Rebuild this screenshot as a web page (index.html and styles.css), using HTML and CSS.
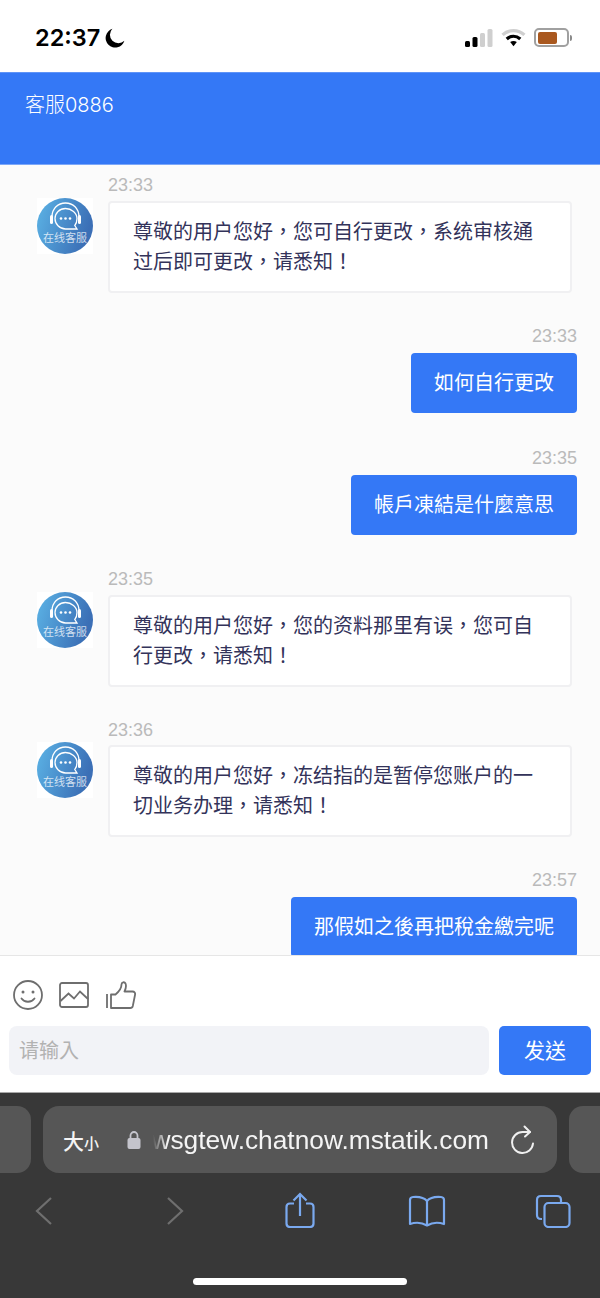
FILE: index.html
```html
<!DOCTYPE html>
<html lang="zh-TW">
<head>
<meta charset="utf-8">
<title>客服0886</title>
<link rel="stylesheet" href="styles.css">
</head>
<body>
<div class="page">
  <div class="status">
    <div class="status-left">
      <span class="clock">22:37</span>
      <svg class="moon" viewBox="0 0 20 20"><path d="M7.400 .8A9.600 9.600 0 1 0 19.400 12.800 8.300 8.300 0 0 1 7.400 .8Z" fill="#000"/></svg>
    </div>
    <div class="status-right">
      <svg class="signal" viewBox="0 0 28 18"><rect x="0" y="12" width="5" height="6" rx="1.5" fill="#000"/><rect x="7.500" y="8" width="5" height="10" rx="1.5" fill="#000"/><rect x="15" y="4" width="5" height="14" rx="1.5" fill="#cfcfcf"/><rect x="22.500" y="0" width="5" height="18" rx="1.5" fill="#cfcfcf"/></svg>
      <svg class="wifi" viewBox="0 0 24 18"><path d="M1.500 6.500C7.500 1 16.500 1 22.500 6.500" fill="none" stroke="#cfcfcf" stroke-width="3.200"/><path d="M5.500 10.400C9.500 7 14.500 7 18.500 10.400" fill="none" stroke="#000" stroke-width="3.200"/><path d="M8.800 13.400 12 17.500 15.200 13.400C13.200 11.900 10.800 11.900 8.800 13.400Z" fill="#000"/></svg>
      <div class="battery"><div class="battery-fill"></div></div>
      <div class="battery-nub"></div>
    </div>
  </div>

  <header class="header">客服0886</header>

  <main class="chat">
    <div class="msg left">
      <div class="avatar"><svg class="avatar-art" viewBox="0 0 56 56"><defs><linearGradient id="ag" x1="0" y1="0" x2="1" y2="0.3"><stop offset="0" stop-color="#5cb4e6"/><stop offset="1" stop-color="#3b6fb6"/></linearGradient></defs><use href="#art"/></svg><span class="avatar-text">在线客服</span></div>
      <div class="msg-body">
        <div class="time">23:33</div>
        <div class="bubble">尊敬的用户您好，您可自行更改，系统审核通过后即可更改，请悉知！</div>
      </div>
    </div>

    <div class="msg right">
      <div class="msg-body">
        <div class="time">23:33</div>
        <div class="bubble">如何自行更改</div>
      </div>
    </div>

    <div class="msg right">
      <div class="msg-body">
        <div class="time">23:35</div>
        <div class="bubble">帳戶凍結是什麼意思</div>
      </div>
    </div>

    <div class="msg left">
      <div class="avatar"><svg class="avatar-art" viewBox="0 0 56 56"><use href="#art"/></svg><span class="avatar-text">在线客服</span></div>
      <div class="msg-body">
        <div class="time">23:35</div>
        <div class="bubble">尊敬的用户您好，您的资料那里有误，您可自行更改，请悉知！</div>
      </div>
    </div>

    <div class="msg left">
      <div class="avatar"><svg class="avatar-art" viewBox="0 0 56 56"><use href="#art"/></svg><span class="avatar-text">在线客服</span></div>
      <div class="msg-body">
        <div class="time time-late">23:36</div>
        <div class="bubble">尊敬的用户您好，冻结指的是暂停您账户的一切业务办理，请悉知！</div>
      </div>
    </div>

    <div class="msg right last">
      <div class="msg-body">
        <div class="time">23:57</div>
        <div class="bubble">那假如之後再把稅金繳完呢</div>
      </div>
    </div>
  </main>

  <section class="composer">
    <div class="tools">
      <svg class="tool-smile" viewBox="0 0 30 30"><circle cx="15" cy="15" r="14" fill="none" stroke="#6e6e6e" stroke-width="1.800"/><circle cx="10" cy="12" r="1.500" fill="#6e6e6e"/><circle cx="20" cy="12" r="1.500" fill="#6e6e6e"/><path d="M8.500 18.500C11.500 22.800 18.500 22.800 21.500 18.500" fill="none" stroke="#6e6e6e" stroke-width="1.800" stroke-linecap="round"/></svg>
      <svg class="tool-image" viewBox="0 0 30 26"><rect x="1" y="1" width="28" height="24" rx="2" fill="none" stroke="#6e6e6e" stroke-width="1.800"/><path d="M1.500 19 9.500 11.500 15 16.500 21 9.500 29 17" fill="none" stroke="#6e6e6e" stroke-width="1.800"/></svg>
      <svg class="tool-thumb" viewBox="0 0 30 28"><path d="M1 13V27" stroke="#6e6e6e" stroke-width="1.800" fill="none"/><path d="M5 13.500H9.500C12.500 11 15.500 7 15.500 3.500 15.500 1 18.500 .5 19.500 2.500 20.700 5.500 19.500 8.500 18.500 10.500H26.500C28.500 10.500 29.500 12 29 14L26.800 25C26.500 26.300 25.500 27 24.300 27H5Z" fill="none" stroke="#6e6e6e" stroke-width="1.800" stroke-linejoin="round"/></svg>
    </div>
    <div class="send-row">
      <div class="input">请输入</div>
      <div class="send">发送</div>
    </div>
  </section>

  <footer class="browser">
    <div class="tabs">
      <div class="tab-peek tab-peek-left"></div>
      <div class="address">
        <span class="aa"><span class="aa-big">大</span><span class="aa-small">小</span></span>
        <svg class="lock" viewBox="0 0 14 20"><path d="M3.500 9V5.500a3.500 3.500 0 0 1 7 0V9" fill="none" stroke="#c4c4cc" stroke-width="1.800"/><rect x="0.500" y="8" width="13" height="11" rx="2" fill="#c4c4cc"/></svg>
        <div class="url-clip"><span class="url">wsgtew.chatnow.mstatik.com</span></div>
        <svg class="reload" viewBox="0 0 24 30"><path d="M19 7H11.500A10.500 10.500 0 1 0 22 18.500" fill="none" stroke="#f0f0f0" stroke-width="2" stroke-linecap="round"/><path d="M13.500 1.500 19 7 14 11.500" fill="none" stroke="#f0f0f0" stroke-width="2" stroke-linecap="round" stroke-linejoin="round"/></svg>
      </div>
      <div class="tab-peek tab-peek-right"></div>
    </div>
    <nav class="nav">
      <svg class="nav-back" viewBox="0 0 18 30"><path d="M16 2 2 15 16 28" fill="none" stroke="#6f6f6f" stroke-width="2.200"/></svg>
      <svg class="nav-forward" viewBox="0 0 18 30"><path d="M2 2 16 15 2 28" fill="none" stroke="#6f6f6f" stroke-width="2.200"/></svg>
      <svg class="nav-share" viewBox="0 0 30 36"><path d="M9 11.500H5C2.800 11.500 1.500 12.800 1.500 15V31.500C1.500 33.700 2.800 35 5 35H25C27.200 35 28.500 33.700 28.500 31.500V15C28.500 12.800 27.200 11.500 25 11.500H21" fill="none" stroke="#7aa9ef" stroke-width="2.200"/><path d="M15 24V2M8.500 8.500 15 2 21.500 8.500" fill="none" stroke="#7aa9ef" stroke-width="2.200"/></svg>
      <svg class="nav-book" viewBox="0 0 38 32"><path d="M19 6C16 2.500 11 1.500 5 2 3 2.200 2 3.200 2 5V29C8 27 14 27.500 19 30.500 24 27.500 30 27 36 29V5C36 3.200 35 2.200 33 2 27 1.500 22 2.500 19 6ZM19 6V30" fill="none" stroke="#7aa9ef" stroke-width="2.200" stroke-linejoin="round"/></svg>
      <svg class="nav-tabs" viewBox="0 0 36 34"><path d="M7 25H6C3.500 25 2 23.500 2 21V6C2 3.500 3.500 2 6 2H22C24.500 2 26 3.500 26 6V8" fill="none" stroke="#7aa9ef" stroke-width="2.200"/><rect x="9.500" y="9" width="25" height="24" rx="4" fill="none" stroke="#7aa9ef" stroke-width="2.200"/></svg>
    </nav>
    <div class="home-row"><div class="home"></div></div>
  </footer>
</div>
<svg class="defs" width="0" height="0" aria-hidden="true"><g id="art"><circle cx="28" cy="28" r="28" fill="url(#ag)"/><path d="M15 22V19C15 10.500 21 5 28.500 5S42 10.500 42 19V22" fill="none" stroke="#fff" stroke-width="1.300"/><rect x="13" y="17" width="3" height="9" rx="1.500" fill="#fff"/><rect x="41" y="17" width="3" height="9" rx="1.500" fill="#fff"/><path d="M28.500 10.500C22.500 10.500 18 15 18 20.500S22.500 31 28.500 31H40L37.800 27.500C39.200 25.700 40 23.200 40 20.500 40 15 34.500 10.500 28.500 10.500Z" fill="none" stroke="#fff" stroke-width="1.300"/><circle cx="24" cy="20.500" r="1.300" fill="#fff"/><circle cx="28.500" cy="20.500" r="1.300" fill="#fff"/><circle cx="33" cy="20.500" r="1.300" fill="#fff"/></g></svg>
</body>
</html>
```

FILE: styles.css
```css
* { box-sizing: border-box; }
html, body { margin: 0; padding: 0; }
body { font-family: "Liberation Sans", "Noto Sans CJK TC", sans-serif; background: #fff; }
.defs { display: block; height: 0; }

.page { width: 600px; height: 1298px; display: flex; flex-direction: column; overflow: hidden; }

/* iOS status bar */
.status { height: 72px; flex: none; background: #fff; display: flex; justify-content: space-between; align-items: center; padding: 3px 28px 0 35px; }
.status-left { display: flex; align-items: center; gap: 5px; }
.clock { font-family: Inter, "Liberation Sans", sans-serif; font-weight: 600; font-size: 23.500px; color: #000; line-height: 28px; }
.moon { width: 20px; height: 20px; display: block; }
.status-right { display: flex; align-items: center; }
.signal { width: 28px; height: 18px; display: block; margin-right: 8px; }
.wifi { width: 25px; height: 19px; display: block; margin-right: 8px; }
.battery { width: 35px; height: 19px; border: 2px solid #a0a0a0; border-radius: 5px; padding: 1.500px; background: #fff; }
.battery-fill { width: 19px; height: 100%; background: #a9581f; border-radius: 2px; }
.battery-nub { width: 2px; height: 6px; background: #8a8a8a; border-radius: 0 2px 2px 0; margin-left: 1px; }

/* Header */
.header { height: 93px; flex: none; background: #3478f6; border-top: 1px solid #5f94f7; border-bottom: 1px solid #7ca7f8; color: #fff; font-family: Inter, "Noto Sans CJK TC", sans-serif; font-weight: 300; font-size: 20px; line-height: 30px; padding: 17px 25px 0; }

/* Chat */
.chat { flex: 1 1 0; min-height: 0; overflow: hidden; background: #fbfbfb; padding: 0 23px 0 37px; }
.msg { display: flex; }
.msg.left { margin-bottom: 32px; gap: 15px; }
.msg.right { margin-bottom: 34px; justify-content: flex-end; }
.msg.right.last { margin-top: 1px; }
.msg-body { display: flex; flex-direction: column; }
.msg.left .msg-body { flex: 0 0 464px; }
.msg.right .msg-body { align-items: flex-end; }
.time { font-size: 18px; line-height: 22px; color: #bababa; }
.msg.left .time { margin-top: -1px; margin-bottom: 5px; }
.msg.left .time.time-late { margin-top: 0; margin-bottom: 4px; }
.msg.right .time { margin-bottom: 6px; }
.msg:first-child { margin-top: 10px; }
.bubble { font-size: 20px; line-height: 30px; border-radius: 4px; }
.msg.left .bubble { background: #fff; color: #33335a; border: 2px solid #f0f0f2; padding: 14px 23px; }
.msg.right .bubble { background: #3478f6; color: #fff; padding: 15px 23px; }

.avatar { position: relative; flex: none; width: 56px; height: 56px; margin-top: 23px; background: #fff; }
.avatar-art { width: 56px; height: 56px; display: block; }
.avatar-text { position: absolute; left: 0; right: 0; top: 33px; text-align: center; font-size: 11px; line-height: 14px; color: rgba(255,255,255,.75); }

/* Composer */
.composer { height: 137px; flex: none; background: #fff; border-top: 1px solid #e6e6e6; padding: 23px 9px 0; }
.tools { display: flex; align-items: center; height: 32px; padding-left: 4px; }
.tool-smile { width: 30px; height: 30px; display: block; margin-right: 16px; }
.tool-image { width: 30px; height: 26px; display: block; margin-right: 17px; }
.tool-thumb { width: 30px; height: 28px; display: block; }
.send-row { display: flex; gap: 10px; margin-top: 15px; }
.input { width: 480px; height: 49px; border-radius: 8px; background: #f2f3f7; color: #b2b2b2; font-size: 20px; line-height: 51px; padding-left: 10px; }
.send { width: 92px; height: 49px; border-radius: 5px; background: #3478f6; color: #fff; font-size: 21px; line-height: 49px; text-align: center; }

/* Safari bar */
.browser { flex: none; height: 206px; background: #383838; border-top: 1px solid #a8a8a8; display: flex; flex-direction: column; }
.tabs { display: flex; gap: 12px; margin-top: 13px; height: 67px; flex: none; }
.tab-peek { flex: 1 1 0; background: #565656; }
.tab-peek-left { border-radius: 0 14px 14px 0; }
.tab-peek-right { border-radius: 14px 0 0 14px; }
.address { flex: 0 0 514px; background: #565656; border-radius: 16px; display: flex; align-items: center; padding: 0 0 0 20px; color: #f4f4f4; }
.aa { width: 64px; flex: none; display: flex; align-items: baseline; font-family: "Noto Sans CJK TC", sans-serif; font-weight: 500; }
.aa-big { font-size: 21px; }
.aa-small { font-size: 15px; }
.lock { width: 14px; height: 20px; display: block; flex: none; }
.url-clip { flex: 0 0 336px; margin-left: 12px; overflow: hidden; display: flex; justify-content: flex-end; white-space: nowrap; -webkit-mask-image: linear-gradient(90deg, transparent 0, #000 14px); mask-image: linear-gradient(90deg, transparent 0, #000 14px); }
.url { font-family: "Liberation Sans", sans-serif; font-size: 26.300px; line-height: 36px; color: #f4f4f4; flex: none; }
.reload { width: 24px; height: 30px; display: block; flex: none; margin-left: 22px; }

.nav { height: 50px; margin-top: 13px; flex: none; display: flex; align-items: center; padding-left: 35px; }
.nav-back { width: 18px; height: 30px; display: block; }
.nav-forward { width: 18px; height: 30px; display: block; margin-left: 113px; }
.nav-share { width: 30px; height: 36px; display: block; margin-left: 101px; margin-top: -2px; }
.nav-book { width: 38px; height: 32px; display: block; margin-left: 93px; }
.nav-tabs { width: 36px; height: 34px; display: block; margin-left: 89px; }

.home-row { display: flex; justify-content: center; margin-top: 42px; }
.home { width: 214px; height: 7px; border-radius: 4px; background: #fff; }
```
